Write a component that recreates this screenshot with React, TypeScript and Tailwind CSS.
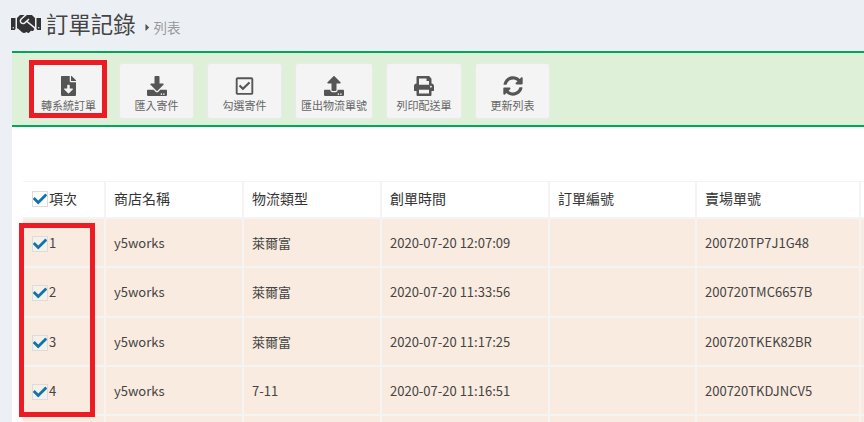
import React from 'react';
import { FaDownload, FaFileDownload, FaPrint, FaRegCheckSquare, FaHandshake, FaSyncAlt, FaUpload, FaCaretRight, FaCheck } from 'react-icons/fa';

const tools = [
    { label: '轉系統訂單', icon: FaFileDownload, size: 'text-[19px]', width: 'w-[75px]' },
    { label: '匯入寄件', icon: FaDownload, size: 'text-[20px]', width: 'w-[75px]' },
    { label: '勾選寄件', icon: FaRegCheckSquare, size: 'text-[19px]', width: 'w-[75px]' },
    { label: '匯出物流單號', icon: FaUpload, size: 'text-[20px]', width: 'w-[78px]' },
    { label: '列印配送單', icon: FaPrint, size: 'text-[20px]', width: 'w-[76px]' },
    { label: '更新列表', icon: FaSyncAlt, size: 'text-[20px]', width: 'w-[75px]' },
];

const headers = ['商店名稱', '物流類型', '創單時間', '訂單編號', '賣場單號', ''];

const rows = [
    { id: 1, shop: 'y5works', type: '萊爾富', time: '2020-07-20 12:07:09', order: '200720TP7J1G48' },
    { id: 2, shop: 'y5works', type: '萊爾富', time: '2020-07-20 11:33:56', order: '200720TMC6657B' },
    { id: 3, shop: 'y5works', type: '萊爾富', time: '2020-07-20 11:17:25', order: '200720TKEK82BR' },
    { id: 4, shop: 'y5works', type: '7-11', time: '2020-07-20 11:16:51', order: '200720TKDJNCV5' },
    { id: 5, shop: '', type: '', time: '', order: '' },
];

const Check = ({ box }: { box: string }) => (
    <span className={`flex h-[16px] w-[16px] items-center justify-center border border-[#dcdcdc] ${box}`}>
        <FaCheck className="text-[14px] text-[#0f75a8]" />
    </span>
);

const App: React.FC = () => {
    return (
        <div className="relative h-[422px] w-[864px] overflow-hidden bg-[#ecf0f5] font-['Noto_Sans_CJK_TC',sans-serif] text-[#444]">
            {/* Header */}
            <div className="flex h-[51px] items-start pl-[11px] pt-[8px]">
                <FaHandshake className="mt-[1px] text-[30px] text-[#333]" />
                <h1 className="ml-[5px] text-[22.4px] leading-[30px] text-[#444]">訂單記錄</h1>
                <div className="ml-[6px] mt-[11px] flex items-center text-[13.5px] leading-[16px] text-[#999]">
                    <FaCaretRight className="text-[11px] text-[#555]" />
                    <span className="ml-[1px]">列表</span>
                </div>
            </div>

            {/* Panel */}
            <div className="ml-[12px] h-[371px] bg-white">
                <div className="flex h-[76px] gap-[13px] border-y-[2px] border-[#00a65a] bg-[#dff0d8] pl-[19px] pt-[10px]">
                    {tools.map((t) => (
                        <div
                            key={t.label}
                            className={`flex h-[56px] flex-col items-center rounded-[3px] border border-[#eaeaea] bg-[#f4f4f4] pt-[12px] text-[#666] ${t.width}`}
                        >
                            <t.icon className={`${t.size} h-[20px] text-[#555]`} />
                            <span className="mt-[2px] whitespace-nowrap text-[11px] leading-[14px]">{t.label}</span>
                        </div>
                    ))}
                </div>

                {/* Table */}
                <div className="pl-[11px] pt-[54px]">
                    <table className="w-[860px] table-fixed border-separate border-spacing-0 text-[13px]">
                        <thead>
                            <tr className="h-[38px] text-left text-[14px] text-[#333]">
                                <th className="w-[83px] border-[#f4f4f4] border-b-[2px] border-r-[2px] border-t-[1px] pb-[2px] pl-[9px] font-normal">
                                    <div className="flex items-center">
                                        <Check box="bg-white" />
                                        <span className="ml-[1px]">項次</span>
                                    </div>
                                </th>
                                {headers.map((h, i) => (
                                    <th
                                        key={i}
                                        className={`border-[#f4f4f4] border-b-[2px] border-r-[2px] border-t-[1px] pb-[2px] pl-[8px] font-normal ${
                                            ['w-[138px]', 'w-[138px]', 'w-[168px]', 'w-[147px]', 'w-[164px]', 'w-[22px]'][i]
                                        }`}
                                    >
                                        {h}
                                    </th>
                                ))}
                            </tr>
                        </thead>
                        <tbody>
                            {rows.map((r) => (
                                <tr key={r.id} className="h-[49.33px] bg-[#f9ebdf] text-[#444]">
                                    <td className="border-[#f4f4f4] border-b-[2px] border-r-[2px] pl-[9px]">
                                        {r.shop && (
                                            <div className="flex items-center">
                                                <span className="mt-[3px]">
                                                    <Check box="bg-[#f5f0ea]" />
                                                </span>
                                                <span className="ml-[1px]">{r.id}</span>
                                            </div>
                                        )}
                                    </td>
                                    <td className="border-[#f4f4f4] border-b-[2px] border-r-[2px] pl-[8px]">{r.shop}</td>
                                    <td className="border-[#f4f4f4] border-b-[2px] border-r-[2px] pl-[8px]">{r.type}</td>
                                    <td className="border-[#f4f4f4] border-b-[2px] border-r-[2px] pl-[8px]">{r.time}</td>
                                    <td className="border-[#f4f4f4] border-b-[2px] border-r-[2px] pl-[8px]"></td>
                                    <td className="border-[#f4f4f4] border-b-[2px] border-r-[2px] pl-[8px]">{r.order}</td>
                                    <td className="border-[#f4f4f4] border-b-[2px] border-r-[2px]"></td>
                                </tr>
                            ))}
                        </tbody>
                    </table>
                </div>
            </div>

            {/* Red annotation boxes */}
            <div className="absolute left-[29px] top-[60px] h-[58px] w-[78px] border-[5px] border-[#ed1c24]" />
            <div className="absolute left-[19px] top-[223px] h-[194px] w-[76px] border-[5px] border-[#ed1c24]" />
        </div>
    );
};

export default App;
